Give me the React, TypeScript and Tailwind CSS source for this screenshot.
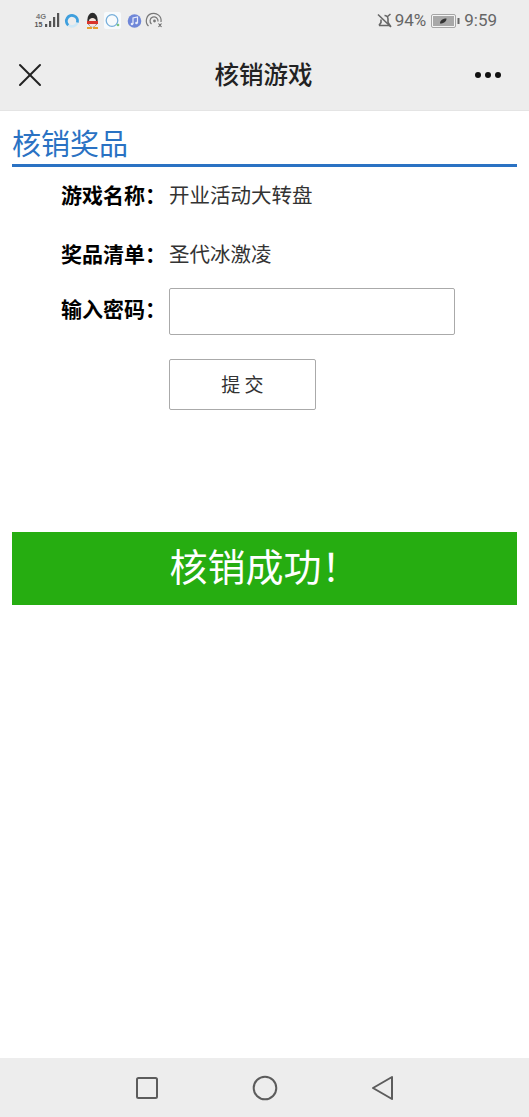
import { X } from "lucide-react";

const FONT = "font-['Noto_Sans_CJK_SC','Noto_Sans',sans-serif]";

const StatusLeft = () => (
  <svg width="130" height="20" viewBox="0 0 130 20" fill="none">
    {/* signal */}
    <text x="2" y="7.5" fontSize="7.5" fontWeight="700" fill="#777" fontFamily="Liberation Sans, sans-serif">4G</text>
    <text x="0.5" y="15.5" fontSize="7" fontWeight="700" fill="#555" fontFamily="Liberation Sans, sans-serif">15</text>
    <rect x="11" y="13" width="2.2" height="3" fill="#555" />
    <rect x="15" y="10" width="2.2" height="6" fill="#555" />
    <rect x="19" y="6" width="2.2" height="10" fill="#555" />
    <rect x="23" y="2" width="2.2" height="14" fill="#555" />
    {/* browser ring */}
    <circle cx="38" cy="10" r="5.4" stroke="#cfe8f6" strokeWidth="2.6" />
    <path d="M34.2 14.2 A5.6 5.6 0 1 1 43.4 11.5" stroke="#3f9fdd" strokeWidth="2.8" />
    {/* qq */}
    <ellipse cx="58.5" cy="9" rx="5.2" ry="7.2" fill="#2b2b2b" />
    <ellipse cx="58.5" cy="11.5" rx="3.9" ry="4.5" fill="#f4e6de" />
    <path d="M53 10 h11 v3 h-11z" fill="#d9342b" />
    <path d="M53 17 h5 M59 17 h5" stroke="#e8a12d" strokeWidth="1.8" />
    {/* bubble */}
    <rect x="70" y="1" width="17" height="17" rx="2" fill="#f7fafc" />
    <circle cx="78" cy="9.5" r="5.8" stroke="#78afdb" strokeWidth="1.3" />
    <circle cx="84" cy="14" r="1.3" fill="#7cc47f" />
    {/* music */}
    <circle cx="100.5" cy="10" r="6.8" fill="#6f87d8" />
    <path d="M99 13 V7 L103.5 6 V12" stroke="#e6ebfa" strokeWidth="1.2" />
    <circle cx="98" cy="13" r="1.3" fill="#e6ebfa" />
    <circle cx="102.5" cy="12" r="1.3" fill="#e6ebfa" />
    {/* hotspot */}
    <path d="M114.5 15 A7.4 7.4 0 1 1 127 11" stroke="#777" strokeWidth="1.2" />
    <path d="M117.5 13 A4 4 0 1 1 124 10.5" stroke="#777" strokeWidth="1.2" />
    <circle cx="120.5" cy="10" r="1.4" fill="#777" />
    <path d="M124.5 12.5 l3 3.5 M127.5 12.5 l-3 3.5" stroke="#666" strokeWidth="1.1" />
  </svg>
);

const MuteIcon = () => (
  <svg width="15" height="15" viewBox="0 0 15 15" fill="none" stroke="#666" strokeWidth="1.6">
    <path d="M1 1.5 L14 14" />
    <path d="M2 12.5 H13 L11 9.5 V6 C11 4 9.5 2.5 7.5 2.5" />
    <path d="M4 6.5 V9.5 L2 12.5" />
    <path d="M13.5 1 L10 4" />
  </svg>
);

const Battery = () => (
  <svg width="29" height="14" viewBox="0 0 29 14" fill="none">
    <rect x="0.5" y="0.5" width="24" height="13" rx="1.5" fill="#f4f4f4" stroke="#a5a5a5" />
    <rect x="2" y="2" width="21" height="10" fill="#a8a8a8" />
    <path d="M9 9.5 C9 6 12 4.5 15.5 4.5 C15.5 8 12.5 9.5 9 9.5Z" fill="#333" />
    <rect x="26.5" y="4" width="2" height="6" fill="#666" />
  </svg>
);

export default function App() {
  return (
    <div className={`${FONT} w-[529px] h-[1117px] flex flex-col bg-white overflow-hidden`}>
      <header className="h-[111px] shrink-0 bg-[#ededed] border-b border-[#e4e4e4] flex flex-col">
        <div className="h-[41px] flex items-center justify-between pl-[34px] pr-[32px]">
          <StatusLeft />
          <div className="flex items-center text-[#666] text-[17px] font-['Roboto',sans-serif] leading-none">
            <MuteIcon />
            <span className="ml-[3px]">94%</span>
            <span className="ml-[5px] flex"><Battery /></span>
            <span className="ml-[4px]">9:59</span>
          </div>
        </div>
        <div className="flex-1 flex items-center justify-between pl-[10px] pr-[28px] pb-[2px]">
          <X size={40} strokeWidth={1.2} className="text-[#222]" />
          <div className="text-[24.5px] font-medium leading-none text-[#222] ml-[2px]">核销游戏</div>
          <div className="flex gap-[4px]">
            <span className="w-[6px] h-[6px] rounded-full bg-[#111]" />
            <span className="w-[6px] h-[6px] rounded-full bg-[#111]" />
            <span className="w-[6px] h-[6px] rounded-full bg-[#111]" />
          </div>
        </div>
      </header>

      <main className="flex-1 px-[12px]">
        <h2 className="h-[56px] border-b-[3px] border-[#2a72c3] text-[#2a72c3] text-[29px] font-normal leading-[62px]">核销奖品</h2>

        <div className="flex items-center h-[54px]">
          <div className="w-[157px] pl-[49px] text-[21px] font-bold text-black leading-none">游戏名称：</div>
          <div className="text-[20.5px] text-[#333] leading-none">开业活动大转盘</div>
        </div>
        <div className="flex items-center h-[64px]">
          <div className="w-[157px] pl-[49px] text-[21px] font-bold text-black leading-none">奖品清单：</div>
          <div className="text-[20.5px] text-[#333] leading-none">圣代冰激凌</div>
        </div>
        <div className="flex items-center mt-[3px]">
          <div className="w-[157px] pl-[49px] pb-[6px] text-[21px] font-bold text-black leading-none">输入密码：</div>
          <input className="w-[286px] h-[47px] border border-[#aaa] rounded-[2px] bg-white outline-none" />
        </div>
        <div className="pl-[157px] mt-[24px]">
          <button className="w-[147px] h-[51px] border border-[#aaa] rounded-[2px] bg-white text-[19px] text-[#333] leading-none pb-[2px]">提 交</button>
        </div>

        <div className="mt-[122px] h-[73px] bg-[#26ad11] text-white text-[38px] leading-[66px] text-center">核销成功！</div>
      </main>

      <footer className="h-[59px] shrink-0 bg-[#ededed] flex items-center justify-center gap-[93px] pl-[1px]">
        <svg width="24" height="24" viewBox="0 0 24 24" fill="none" stroke="#5c5c5c" strokeWidth="2"><rect x="2" y="2" width="20" height="20" rx="1.5" /></svg>
        <svg width="26" height="26" viewBox="0 0 26 26" fill="none" stroke="#5c5c5c" strokeWidth="2"><circle cx="13" cy="13" r="11.3" /></svg>
        <svg width="24" height="26" viewBox="0 0 24 26" fill="none" stroke="#5c5c5c" strokeWidth="2" strokeLinejoin="round"><path d="M21 2 L2 13 L21 24 Z" /></svg>
      </footer>
    </div>
  );
}
